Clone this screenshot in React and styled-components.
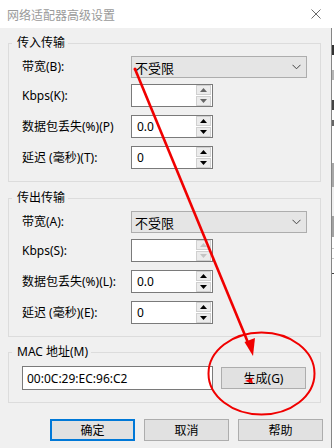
import styled, { createGlobalStyle } from "styled-components";

const GlobalStyle = createGlobalStyle`
  html, body {
    margin: 0;
    padding: 0;
    background: #ffffff;
  }
  body {
    font-family: "Noto Sans", "Noto Sans CJK SC", sans-serif;
    font-size: 12px;
    color: #000;
  }
  * { box-sizing: border-box; }
`;

const Window = styled.div`
  position: relative;
  width: 334px;
  height: 448px;
  overflow: hidden;
  display: flex;
  flex-direction: column;
  background: #fff;
`;

const TitleBar = styled.div`
  height: 28px;
  flex: none;
  display: flex;
  align-items: center;
  justify-content: space-between;
  padding: 0 13px 0 7px;
  background: #fff;
  color: #9a9a9a;
  font-family: "Noto Sans CJK SC", sans-serif;
  font-size: 12px;
`;

const Main = styled.div`
  flex: 1;
  display: flex;
`;

const Dialog = styled.div`
  width: 331px;
  background: #f0f0f0;
  padding: 7px 10px 0 8px;
  display: flex;
  flex-direction: column;
`;

const Edge = styled.div`
  flex: 1;
  border-left: 1px solid #858585;
  background: linear-gradient(
    to bottom,
    #fff 0 17px,
    #333 17px 27px,
    #fff 27px 42px,
    #b5b5b5 42px 52px,
    #fff 52px 72px,
    #444 72px 82px,
    #fff 82px 92px,
    #666 92px 98px,
    #fff 98px 135px,
    #a8a8a8 135px 159px,
    #f0f0f0 159px 188px,
    #a2a2a2 188px 209px,
    #fff 209px 220px,
    #c8c8c8 220px 221px,
    #fff 221px 230px,
    #c8c8c8 230px 231px,
    #fff 231px 245px,
    #444 245px 246px,
    #fff 246px
  );
`;

const Group = styled.fieldset`
  margin: ${(p) => p.$top || 0}px 0 0 0;
  min-width: 0;
  border: 1px solid #dcdcdc;
  padding: ${(p) => p.$padTop || 5}px 13px ${(p) => p.$padBottom || 12}px;
  display: flex;
  flex-direction: column;
`;

const Legend = styled.legend`
  margin-left: -10px;
  padding: 0 3px 0 5px;
  line-height: 16px;
  font-size: 12px;
  font-family: "Noto Sans", "Noto Sans CJK SC", sans-serif;
`;

const Row = styled.div`
  display: flex;
  align-items: center;
  margin-top: ${(p) => p.$gap || 0}px;
`;

const Label = styled.div`
  width: 109px;
  flex: none;
  white-space: nowrap;
  line-height: 16px;
`;

const Select = styled.div`
  width: 176px;
  height: 22px;
  border: 1px solid #adadad;
  background: #e5e5e5;
  display: flex;
  align-items: center;
  justify-content: space-between;
  padding: 0 5px 0 3px;
  font-family: "Noto Sans CJK SC", sans-serif;
  font-size: 13px;
`;

const Spin = styled.div`
  width: 82px;
  height: 23px;
  border: 1px solid #7a7a7a;
  background: #fff;
  display: flex;
  align-items: stretch;
`;

const SpinValue = styled.div`
  flex: 1;
  padding-left: 5px;
  display: flex;
  align-items: center;
  font-size: 12px;
`;

const SpinButtons = styled.div`
  width: 16px;
  display: flex;
  flex-direction: column;
  gap: 1px;
  padding: 0 1px 0 0;
`;

const SpinButton = styled.div`
  flex: 1;
  border: 1px solid #d0d0d0;
  background: #ececec;
  display: flex;
  align-items: center;
  justify-content: center;
  color: ${(p) => p.$color || "#000"};
`;

const MacInput = styled.div`
  width: 191px;
  height: 24px;
  border: 1px solid #7a7a7a;
  background: #fff;
  padding-left: 4px;
  display: flex;
  align-items: center;
  font-size: 12px;
`;

const Button = styled.div`
  width: 85px;
  height: 22px;
  flex: none;
  border: ${(p) => (p.$primary ? "2px solid #0078d7" : "1px solid #adadad")};
  background: #e1e1e1;
  display: flex;
  align-items: center;
  justify-content: center;
  font-family: "Noto Sans", "Noto Sans CJK SC", sans-serif;
  font-size: 12px;
  margin-left: ${(p) => p.$left || 0}px;
`;

const ButtonBar = styled.div`
  display: flex;
  justify-content: flex-end;
  gap: 9px;
  margin-top: 16px;
  margin-right: -2px;
`;

const Overlay = styled.svg`
  position: absolute;
  left: 0;
  top: 0;
  pointer-events: none;
`;

function Chevron() {
  return (
    <svg width="9" height="6" viewBox="0 0 9 6">
      <path d="M0.5 0.8 L4.5 4.8 L8.5 0.8" fill="none" stroke="#444" strokeWidth="1" />
    </svg>
  );
}

function Tri({ up }) {
  return (
    <svg width="7" height="4" viewBox="0 0 7 4">
      <path d={up ? "M3.5 0 L7 4 L0 4 Z" : "M0 0 L7 0 L3.5 4 Z"} fill="currentColor" />
    </svg>
  );
}

function SpinBox({ value, arrow }) {
  return (
    <Spin>
      <SpinValue>{value}</SpinValue>
      <SpinButtons>
        <SpinButton $color={arrow}>
          <Tri up />
        </SpinButton>
        <SpinButton $color={arrow}>
          <Tri />
        </SpinButton>
      </SpinButtons>
    </Spin>
  );
}

function TransferGroup({ title, labels, top, kbpsArrow }) {
  return (
    <Group $top={top}>
      <Legend>{title}</Legend>
      <Row>
        <Label>{labels[0]}</Label>
        <Select>
          <span>不受限</span>
          <Chevron />
        </Select>
      </Row>
      <Row $gap={6}>
        <Label>{labels[1]}</Label>
        <SpinBox value="" arrow={kbpsArrow} />
      </Row>
      <Row $gap={8}>
        <Label>{labels[2]}</Label>
        <SpinBox value="0.0" />
      </Row>
      <Row $gap={8}>
        <Label>{labels[3]}</Label>
        <SpinBox value="0" />
      </Row>
    </Group>
  );
}

export default function App() {
  return (
    <>
      <GlobalStyle />
      <Window>
        <TitleBar>
          <span>网络适配器高级设置</span>
          <svg width="10" height="10" viewBox="0 0 10 10">
            <path d="M0.5 0.5 L9.5 9.5 M9.5 0.5 L0.5 9.5" stroke="#6a6a6a" strokeWidth="1" />
          </svg>
        </TitleBar>
        <Main>
          <Dialog>
            <TransferGroup
              title="传入传输"
              labels={["带宽(B):", "Kbps(K):", "数据包丢失(%)(P)", "延迟 (毫秒)(T):"]}
              kbpsArrow="#666"
            />
            <TransferGroup
              title="传出传输"
              labels={["带宽(A):", "Kbps(S):", "数据包丢失(%)(L):", "延迟 (毫秒)(E):"]}
              top={8}
              kbpsArrow="#c4c4c4"
            />
            <Group $top={7} $padTop={6} $padBottom={12}>
              <Legend>MAC 地址(M)</Legend>
              <Row>
                <MacInput>00:0C:29:EC:96:C2</MacInput>
                <Button $left={8}>生成(G)</Button>
              </Row>
            </Group>
            <ButtonBar>
              <Button $primary>确定</Button>
              <Button>取消</Button>
              <Button>帮助</Button>
            </ButtonBar>
          </Dialog>
          <Edge />
        </Main>
        <Overlay width="334" height="448" viewBox="0 0 334 448">
          <line x1="135" y1="69" x2="249" y2="345" stroke="#f00000" strokeWidth="2.6" />
          <polygon points="253,356 244.5,342 255,338" fill="#f00000" />
          <ellipse cx="261.5" cy="373.5" rx="53" ry="41" fill="none" stroke="#f00000" strokeWidth="2" />
          <polygon points="245,381 253,377.5 252,380 253,383.5" fill="#f00000" />
          <circle cx="135" cy="69" r="1.5" fill="#f00000" />
        </Overlay>
      </Window>
    </>
  );
}
